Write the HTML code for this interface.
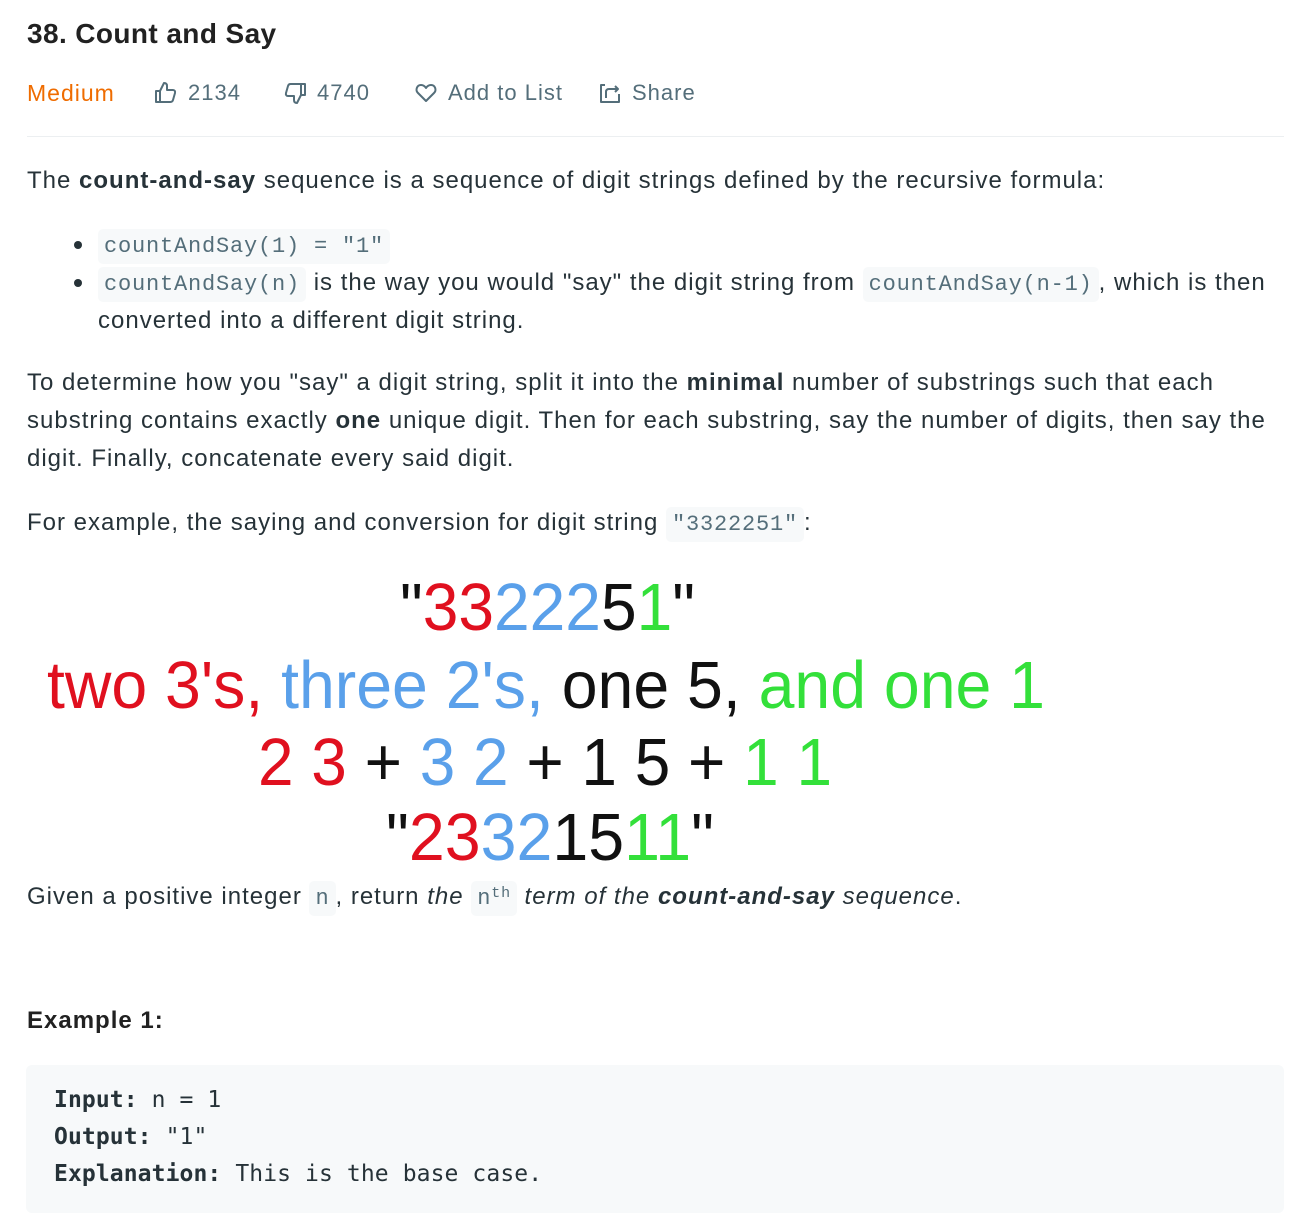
<!DOCTYPE html>
<html><head><meta charset="utf-8"><style>
*{margin:0;padding:0;box-sizing:border-box}
body{width:1294px;height:1218px;background:#fff;font-family:"Liberation Sans",sans-serif;color:#263238;position:relative;overflow:hidden}
.l{position:absolute;left:27px;white-space:nowrap;font-size:24px;line-height:38px;height:38px;letter-spacing:1px}
code{font-family:"Liberation Mono",monospace;font-size:22px;letter-spacing:0.8px;color:#546e7a;background:#f7f9fa;border-radius:5px;padding:5px 6px}
b{font-weight:700}
.meta{position:absolute;top:78px;height:30px;font-size:22px;line-height:30px;color:#546e7a;white-space:nowrap;display:flex;align-items:center;letter-spacing:1px}
.meta svg{margin-right:10px}
.dot{position:absolute;left:74px;width:8px;height:8px;border-radius:50%;background:#263238}
pre{position:absolute;left:26px;top:1065px;width:1258px;height:148px;background:#f7f9fa;border-radius:6px;font-family:"DejaVu Sans Mono",monospace;font-size:23px;letter-spacing:0.1px;line-height:37px;color:#263238;padding:17px 28px}
pre b{font-weight:700}
</style></head><body>
<div style="position:absolute;left:27px;top:16px;font-size:28px;line-height:36px;font-weight:700;color:#212121;letter-spacing:0.4px">38. Count and Say</div>

<div class="meta" style="left:27px;color:#ef6c00;font-size:23px">Medium</div>
<div class="meta" style="left:154px"><svg width="24" height="24" viewBox="0 0 24 24" fill="none" stroke="#546e7a" stroke-width="2" stroke-linejoin="round"><path d="M2 10h4v11H2zM6 10l4-8c2 0 3 1 3 3v4h6c1.5 0 2.5 1.3 2 3l-2 7c-.4 1.3-1.3 2-2.5 2H6"/></svg>2134</div>
<div class="meta" style="left:283px"><svg width="24" height="24" viewBox="0 0 24 24" fill="none" stroke="#546e7a" stroke-width="2" stroke-linejoin="round"><path d="M22 14h-4V3h4zM18 14l-4 8c-2 0-3-1-3-3v-4H5c-1.5 0-2.5-1.3-2-3l2-7C5.4 3.7 6.3 3 7.5 3H18"/></svg>4740</div>
<div class="meta" style="left:414px"><svg width="24" height="24" viewBox="0 0 24 24" fill="none" stroke="#546e7a" stroke-width="2" stroke-linejoin="round"><path d="M12 20L4 12C1 9 3 4 7 4c2 0 4 1.5 5 3 1-1.5 3-3 5-3 4 0 6 5 3 8z"/></svg>Add to List</div>
<div class="meta" style="left:598px"><svg width="24" height="24" viewBox="0 0 24 24" fill="none" stroke="#546e7a" stroke-width="2" stroke-linejoin="round"><path d="M7 4H3v17h18v-8M8 17V11c0-2 1-3 3-3h9M17 5l3 3-3 3"/></svg>Share</div>
<div style="position:absolute;left:27px;top:136px;width:1257px;height:1px;background:#eceff1"></div>

<div class="l" style="top:162px">The <b>count-and-say</b> sequence is a sequence of digit strings defined by the recursive formula:</div>
<div class="dot" style="top:241px"></div>
<div class="l" style="left:98px;top:226px"><code>countAndSay(1) = "1"</code></div>
<div class="dot" style="top:279px"></div>
<div class="l" style="left:98px;top:264px"><code>countAndSay(n)</code> is the way you would "say" the digit string from <code>countAndSay(n-1)</code>, which is then</div>
<div class="l" style="left:98px;top:302px">converted into a different digit string.</div>

<div class="l" style="top:364px">To determine how you "say" a digit string, split it into the <b>minimal</b> number of substrings such that each</div>
<div class="l" style="top:402px">substring contains exactly <b>one</b> unique digit. Then for each substring, say the number of digits, then say the</div>
<div class="l" style="top:440px">digit. Finally, concatenate every said digit.</div>
<div class="l" style="top:504px">For example, the saying and conversion for digit string <code>"3322251"</code>:</div>

<svg style="position:absolute;left:0;top:0" width="1294" height="880" font-family="Liberation Sans, sans-serif" font-size="67">
<text x="400" y="630" textLength="295" lengthAdjust="spacingAndGlyphs"><tspan fill="#111">"</tspan><tspan fill="#e0101f">33</tspan><tspan fill="#5aa0ea">222</tspan><tspan fill="#111">5</tspan><tspan fill="#33e03a">1</tspan><tspan fill="#111">"</tspan></text>
<text x="47" y="708" textLength="998" lengthAdjust="spacingAndGlyphs"><tspan fill="#e0101f">two 3's, </tspan><tspan fill="#5aa0ea">three 2's, </tspan><tspan fill="#111">one 5, </tspan><tspan fill="#33e03a">and one 1</tspan></text>
<text x="258" y="785" textLength="574" lengthAdjust="spacingAndGlyphs"><tspan fill="#e0101f">2 3 </tspan><tspan fill="#111">+ </tspan><tspan fill="#5aa0ea">3 2 </tspan><tspan fill="#111">+ 1 5 + </tspan><tspan fill="#33e03a">1 1</tspan></text>
<text x="386" y="860" textLength="328" lengthAdjust="spacingAndGlyphs"><tspan fill="#111">"</tspan><tspan fill="#e0101f">23</tspan><tspan fill="#5aa0ea">32</tspan><tspan fill="#111">15</tspan><tspan fill="#33e03a">11</tspan><tspan fill="#111">"</tspan></text>
</svg>

<div class="l" style="top:875px">Given a positive integer <code>n</code>, return <i>the</i> <code>n<sup style="font-size:15px;vertical-align:7px">th</sup></code> <i>term of the <b>count-and-say</b> sequence</i>.</div>
<div class="l" style="top:1002px;font-weight:700;color:#212121">Example 1:</div>
<pre><b>Input:</b> n = 1
<b>Output:</b> "1"
<b>Explanation:</b> This is the base case.</pre>
</body></html>
